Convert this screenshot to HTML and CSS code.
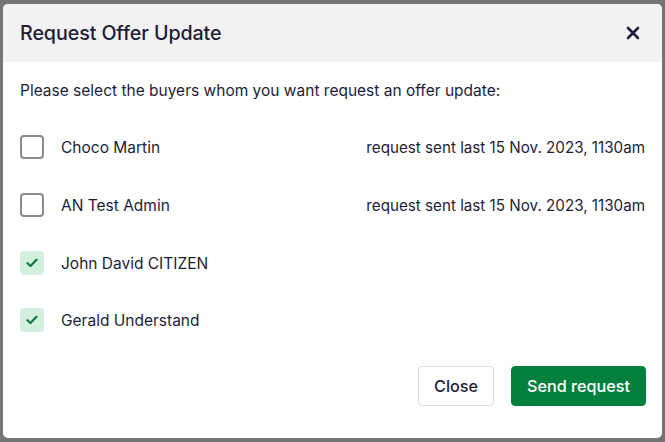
FILE: index.html
```html
<!DOCTYPE html>
<html>
<head>
<meta charset="utf-8">
<link rel="stylesheet" href="styles.css">
</head>
<body>
<div class="dialog">
  <div class="header">
    <h1 class="title">Request Offer Update</h1>
    <button class="close-x" aria-label="Close">
      <svg width="14" height="14" viewBox="0 0 14 14"><path d="M2 2L12 12M12 2L2 12" stroke="#1d1d3a" stroke-width="2.6" stroke-linecap="round"/></svg>
    </button>
  </div>
  <div class="body">
    <p class="intro">Please select the buyers whom you want request an offer update:</p>
    <ul class="list">
      <li class="row"><span class="cb"></span><span class="name">Choco Martin</span><span class="meta">request sent last 15 Nov. 2023, 1130am</span></li>
      <li class="row"><span class="cb"></span><span class="name">AN Test Admin</span><span class="meta">request sent last 15 Nov. 2023, 1130am</span></li>
      <li class="row"><span class="cb checked"><svg width="12" height="10" viewBox="0 0 12 10"><path d="M1.5 5.2L4.5 8L10.5 1.8" fill="none" stroke="#0b7a3b" stroke-width="2.2" stroke-linecap="round" stroke-linejoin="round"/></svg></span><span class="name">John David CITIZEN</span></li>
      <li class="row"><span class="cb checked"><svg width="12" height="10" viewBox="0 0 12 10"><path d="M1.5 5.2L4.5 8L10.5 1.8" fill="none" stroke="#0b7a3b" stroke-width="2.2" stroke-linecap="round" stroke-linejoin="round"/></svg></span><span class="name">Gerald Understand</span></li>
    </ul>
  </div>
  <div class="footer">
    <button class="btn btn-secondary">Close</button>
    <button class="btn btn-primary">Send request</button>
  </div>
</div>
</body>
</html>
```

FILE: styles.css
```css
* { box-sizing: border-box; }
html, body { margin: 0; padding: 0; }
body {
  background: #757575;
  font-family: Inter, "Noto Sans", sans-serif;
  color: #1d1d3a;
  width: 665px;
  height: 442px;
  overflow: hidden;
  padding-top: 4px;
  padding-left: 3px;
}
.dialog {
  width: 659px;
  height: 434px;
  background: #fff;
  border-radius: 5px;
  overflow: hidden;
  display: flex;
  flex-direction: column;
}
.header {
  height: 58px;
  background: #f2f2f2;
  display: flex;
  align-items: center;
  justify-content: space-between;
  padding: 0 22px 0 17px;
}
.title {
  margin: 0;
  font-size: 19.7px;
  font-weight: 500;
  letter-spacing: -0.1px;
}
.close-x {
  border: 0;
  background: none;
  padding: 0;
  width: 14px;
  height: 14px;
  display: flex;
}
.body {
  padding: 17px 16px 0 17px;
}
.intro {
  margin: 0;
  font-size: 15.5px;
  line-height: 24px;
}
.list {
  list-style: none;
  margin: 32px 0 0;
  padding: 0;
  display: flex;
  flex-direction: column;
  gap: 34px;
}
.row {
  display: flex;
  align-items: center;
  height: 24px;
  font-size: 15.5px;
}
.row:nth-child(4) { margin-top: -1px; }
.cb {
  width: 24px;
  height: 24px;
  border: 2px solid #8a8a8a;
  border-radius: 4px;
  display: flex;
  align-items: center;
  justify-content: center;
  flex: none;
}
.cb.checked {
  border: 0;
  background: #d3efdd;
}
.name {
  margin-left: 17px;
  flex: 1;
}
.meta {
  margin-right: 1px;
  font-size: 15.2px;
}
.footer {
  margin-top: auto;
  display: flex;
  justify-content: flex-end;
  gap: 17px;
  padding: 0 16px 32px;
}
.btn {
  height: 40px;
  font-family: Inter, "Noto Sans", sans-serif;
  font-size: 16.2px;
  font-weight: 500;
  border-radius: 4px;
  padding: 0;
  white-space: nowrap;
  display: flex;
  align-items: center;
  justify-content: center;
}
.btn-secondary {
  background: #fff;
  border: 1px solid #dcdcdc;
  color: #1d1d3a;
  width: 76px;
}
.btn-primary {
  background: #03803d;
  border: 1px solid #03803d;
  color: #fff;
  width: 135px;
}
```
